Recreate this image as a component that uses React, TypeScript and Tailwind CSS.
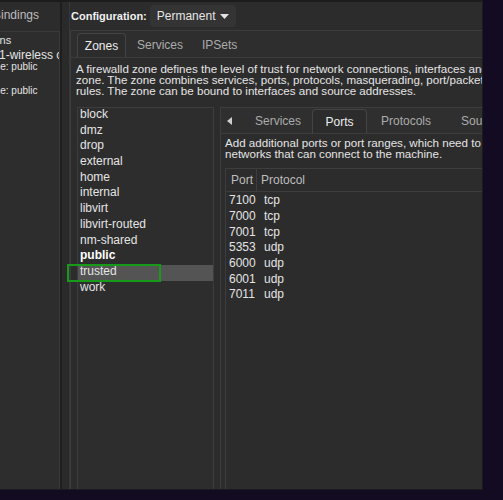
import React from "react";

const zones = [
  "block",
  "dmz",
  "drop",
  "external",
  "home",
  "internal",
  "libvirt",
  "libvirt-routed",
  "nm-shared",
  "public",
  "trusted",
  "work",
];

const ports: [string, string][] = [
  ["7100", "tcp"],
  ["7000", "tcp"],
  ["7001", "tcp"],
  ["5353", "udp"],
  ["6000", "udp"],
  ["6001", "udp"],
  ["7011", "udp"],
];

const font = { fontFamily: '"Liberation Sans", Arial, sans-serif' };

export default function App() {
  return (
    <div
      className="relative h-[500px] w-[503px] overflow-hidden bg-[#130b22] text-[11px] text-[#e4e4e4]"
      style={font}
    >
      {/* window */}
      <div className="flex h-[490px] w-[483px] overflow-hidden border-t-2 border-r border-b border-[#1c1c1c] bg-[#2c2c2c]">
        {/* bindings sidebar */}
        <div className="flex w-[60px] shrink-0 flex-col overflow-hidden">
          <div className="flex h-[29px] items-center whitespace-nowrap pb-[4px] text-[12px] text-[#bdbdbd]">
            <span className="-ml-[7px] shrink-0">Bindings</span>
          </div>
          <div className="flex-1 overflow-hidden border-t border-r border-[#3a3a3a] bg-[#2d2d2d] pt-[1px] leading-[11px]">
            <div className="h-[16px] whitespace-nowrap pt-[2px]">
              <span className="-ml-[50px] inline-block">Connections</span>
            </div>
            <div className="mt-[1px] whitespace-nowrap text-[12px]">
              <span className="-ml-[1px]">1-wireless connection</span>
            </div>
            <div className="-ml-[17px] whitespace-nowrap text-[10px]">Zone: public</div>
            <div className="h-[13px]" />
            <div className="-ml-[17px] whitespace-nowrap text-[10px]">Zone: public</div>
          </div>
        </div>

        {/* paned handle */}
        <div className="w-[10px] shrink-0 border-l-2 border-r border-l-[#1e1e1e] border-r-[#383838] bg-[#2a2a2a]" />

        {/* main area */}
        <div className="flex min-w-0 flex-1 flex-col">
          <div className="flex h-[28px] shrink-0 items-center gap-[3px] pl-[1px]">
            <span className="text-[11px] font-bold text-[#f0f0f0]">Configuration:</span>
            <button className="flex h-[22px] items-center gap-[5px] rounded-[4px] bg-[#343434] px-[7px] text-[12px] text-[#e4e4e4]">
              Permanent
              <svg width="9" height="5" viewBox="0 0 9 5">
                <path d="M0 0h9L4.5 5z" fill="#e4e4e4" />
              </svg>
            </button>
          </div>

          {/* outer notebook */}
          <div className="flex min-h-0 flex-1 flex-col border-t border-l border-[#3c3c3c]">
            <div className="flex h-[27px] shrink-0 items-end border-b border-[#3c3c3c] bg-[#2e2e2e] pl-[6px] text-[12px]">
              <div className="flex h-[24px] w-[49px] shrink-0 items-center justify-center rounded-t-[4px] border border-b-0 border-[#444] bg-[#2c2c2c] text-[#ececec]">
                Zones
              </div>
              <div className="flex h-[24px] shrink-0 items-center px-[11px] text-[#ababab]">Services</div>
              <div className="flex h-[24px] shrink-0 items-center px-[8px] text-[#ababab]">IPSets</div>
            </div>

            <div className="flex min-h-0 flex-1 flex-col pl-[5px]">
              <p className="mt-[5px] whitespace-nowrap leading-[11px] text-[11.6px]">
                A firewalld zone defines the level of trust for network connections, interfaces and
                <br />
                zone. The zone combines services, ports, protocols, masquerading, port/packet
                <br />
                rules. The zone can be bound to interfaces and source addresses.
              </p>

              <div className="mt-[11px] flex min-h-0 flex-1">
                {/* zone list */}
                <div className="ml-[1px] w-[137px] shrink-0 border border-b-0 border-[#3d3d3d] bg-[#2d2d2d] text-[12px]">
                  {zones.map((z) => (
                    <div
                      key={z}
                      className={`h-[15.7px] whitespace-nowrap pl-[2px] leading-[12px] ${
                        z === "trusted" ? "bg-[#545454]" : ""
                      } ${z === "public" ? "font-bold text-white" : ""}`}
                    >
                      {z}
                    </div>
                  ))}
                </div>

                {/* paned handle */}
                <div className="w-[6px] shrink-0" />

                {/* inner notebook */}
                <div className="flex min-w-0 flex-1 flex-col border-t border-l border-[#3d3d3d]">
                  <div className="flex h-[26px] shrink-0 items-end overflow-hidden whitespace-nowrap border-b border-[#3d3d3d] bg-[#2f2f2f] text-[12px]">
                    <div className="flex h-[25px] w-[34px] shrink-0 items-center pl-[6px]">
                      <svg width="5" height="8" viewBox="0 0 5 8">
                        <path d="M5 0v8L0 4z" fill="#cfcfcf" />
                      </svg>
                    </div>
                    <div className="flex h-[24px] w-[57px] shrink-0 items-center text-[#ababab]">Services</div>
                    <div className="flex h-[24px] w-[55px] shrink-0 items-center justify-center rounded-t-[4px] border border-b-0 border-[#444] bg-[#2c2c2c] text-[#ececec]">
                      Ports
                    </div>
                    <div className="flex h-[24px] shrink-0 items-center px-[14px] text-[#ababab]">Protocols</div>
                    <div className="flex h-[24px] shrink-0 items-center px-[16px] text-[#ababab]">Sources</div>
                  </div>

                  <div className="flex min-h-0 flex-1 flex-col pl-[4px]">
                    <p className="mt-[3px] whitespace-nowrap leading-[11px] text-[11.6px]">
                      Add additional ports or port ranges, which need to be bound
                      <br />
                      networks that can connect to the machine.
                    </p>

                    <div className="mt-[9px] flex-1 border border-b-0 border-r-0 border-[#3d3d3d] text-[12px]">
                      <div className="flex h-[23px] items-center border-b border-[#3d3d3d] text-[#bdbdbd]">
                        <div className="flex h-full w-[31px] items-center border-r border-[#3d3d3d] pl-[5px]">
                          Port
                        </div>
                        <div className="pl-[4px]">Protocol</div>
                      </div>
                      {ports.map(([p, proto], i) => (
                        <div key={i} className="flex h-[15.7px] items-center pt-[1px]">
                          <div className="w-[38px] pl-[3px]">{p}</div>
                          <div>{proto}</div>
                        </div>
                      ))}
                    </div>
                  </div>
                </div>
              </div>
            </div>
          </div>
        </div>
      </div>

      {/* green highlight annotation */}
      <div className="absolute left-[67px] top-[264px] h-[18px] w-[94px] border-2 border-[#17991a]" />
    </div>
  );
}
